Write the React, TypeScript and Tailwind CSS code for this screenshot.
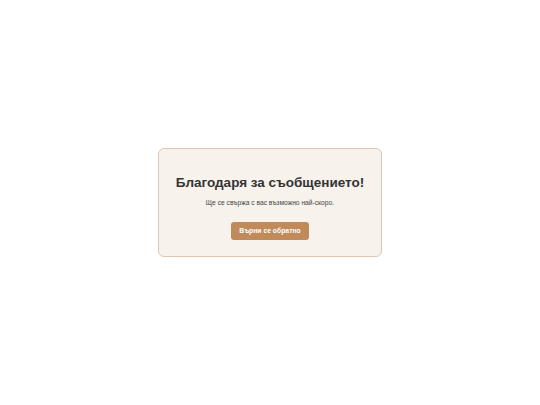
export default function App() {
  return (
    <div className="flex h-[405px] w-[540px] items-center justify-center bg-white font-['Liberation_Sans',Arial,sans-serif]">
      <div className="flex w-[224px] flex-col items-center rounded-md border border-[#dfc6b0] bg-[#f8f2ec] px-2 pt-[25px] pb-[16px] text-center">
        <h1 className="whitespace-nowrap text-[13.5px] leading-[18px] font-bold text-[#333333]">Благодаря за съобщението!</h1>
        <p className="mt-[6px] whitespace-nowrap text-[6.7px] leading-[10px] text-[#444444]">Ще се свържа с вас възможно най-скоро.</p>
        <button className="mt-[14px] h-[18px] rounded-[3px] bg-[#c08a5a] px-[8px] text-[6.8px] font-bold text-white">
          Върни се обратно
        </button>
      </div>
    </div>
  );
}
